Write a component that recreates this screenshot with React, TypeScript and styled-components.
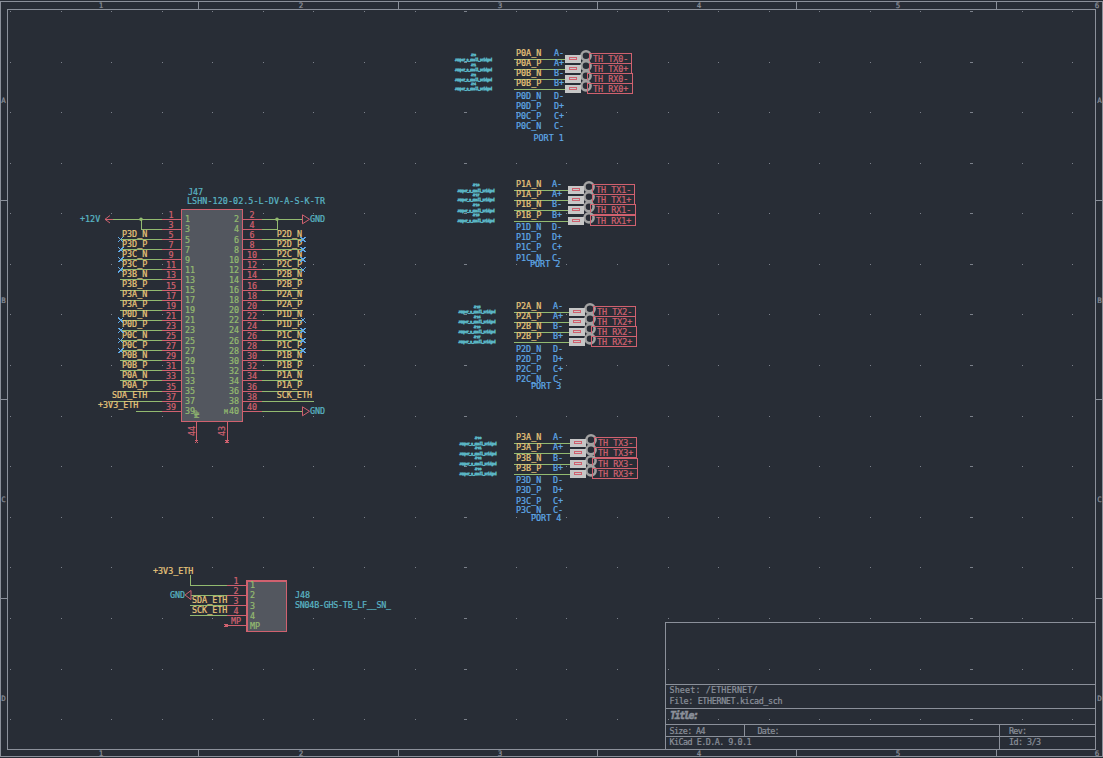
import React from "react";
import styled, { createGlobalStyle } from "styled-components";

const BG = "#282d36";
const FRAME = "#8b909a";
const WIRE = "#93ba70";
const PIN = "#d0616f";
const LABEL = "#e8c67c";
const CYAN = "#5ab5c4";
const BLUE = "#5fa9e8";
const BODY = "#53575f";
const GREY = "#c6c6c6";

const GlobalStyle = createGlobalStyle`
  html, body {
    margin: 0;
    padding: 0;
    background: ${BG};
    overflow: hidden;
  }
`;

const Sheet = styled.div`
  width: 1103px;
  height: 758px;
  background: ${BG};
`;

const Canvas = styled.svg`
  display: block;
  width: 1103px;
  height: 758px;
  line,
  rect,
  polyline {
    shape-rendering: crispEdges;
  }
`;

const Label = styled.text<{ $color?: string; $size?: number }>`
  font-family: "DejaVu Sans Mono", "Liberation Mono", monospace;
  font-size: ${({ $size }) => $size ?? 8.4}px;
  fill: ${({ $color }) => $color ?? LABEL};
  stroke: ${({ $color }) => $color ?? LABEL};
  stroke-width: 0.22px;
`;

const TinyLabel = styled.text`
  font-family: "Liberation Mono", monospace;
  font-size: 2.8px;
  fill: ${CYAN};
  stroke: ${CYAN};
  stroke-width: 0.9px;
`;

const TitleLabel = styled(Label)`
  font-weight: 700;
  font-style: italic;
  font-size: 10px;
  stroke-width: 0.5px;
`;

const Seg = styled.line<{ $color: string }>`
  stroke: ${({ $color }) => $color};
  stroke-width: 1px;
`;

const Outline = styled.rect`
  fill: none;
  stroke: ${PIN};
  stroke-width: 1px;
`;

const Body = styled.rect`
  fill: ${BODY};
  stroke: ${PIN};
  stroke-width: 1.3px;
`;

const Jumper = styled.rect`
  fill: ${GREY};
`;

const JumperLink = styled.rect`
  fill: none;
  stroke: ${PIN};
  stroke-width: 1px;
`;

const Disc = styled.circle`
  fill: none;
  stroke: #a2a2a2;
  stroke-width: 2.6px;
`;

const Junction = styled.circle`
  fill: ${WIRE};
`;

const Flag = styled.polygon`
  fill: none;
  stroke: ${PIN};
  stroke-width: 1px;
`;

const GridDot = styled.rect`
  fill: #7c818b;
`;

const NoConnect: React.FC<{ x: number; y: number; color?: string; r?: number }> = ({ x, y, color = BLUE, r = 2.5 }) => (
  <g>
    <line x1={x - r} y1={y - r} x2={x + r} y2={y + r} stroke={color} />
    <line x1={x - r} y1={y + r} x2={x + r} y2={y - r} stroke={color} />
  </g>
);

const rowY = (i: number) => 219.3 + i * 10.1;

const leftNets = ["P3D_N", "P3D_P", "P3C_N", "P3C_P", "P3B_N", "P3B_P", "P3A_N", "P3A_P", "P0D_N", "P0D_P", "P0C_N", "P0C_P", "P0B_N", "P0B_P", "P0A_N", "P0A_P"];
const rightNets = ["P2D_N", "P2D_P", "P2C_N", "P2C_P", "P2B_N", "P2B_P", "P2A_N", "P2A_P", "P1D_N", "P1D_P", "P1C_N", "P1C_P", "P1B_N", "P1B_P", "P1A_N", "P1A_P"];
const noConnectRows = [2, 3, 4, 5, 10, 11, 12, 13];

const J47: React.FC = () => (
  <g>
    <Body x={181.5} y={209.5} width={61} height={212} />
    <Label x={188} y={194.5} $color={CYAN}>J47</Label>
    <Label x={187} y={204} $color={CYAN} textLength={138}>LSHN-120-02.5-L-DV-A-S-K-TR</Label>
    {Array.from({ length: 20 }, (_, i) => {
      const y = rowY(i);
      return (
        <g key={i}>
          <Seg $color={PIN} x1={162} y1={y} x2={181} y2={y} />
          <Seg $color={PIN} x1={243} y1={y} x2={262} y2={y} />
          <Label x={171} y={y - 1.5} textAnchor="middle" $color={PIN}>{i * 2 + 1}</Label>
          <Label x={252} y={y - 1.5} textAnchor="middle" $color={PIN}>{i * 2 + 2}</Label>
          <Label x={185} y={y + 3} $color={WIRE}>{i * 2 + 1}</Label>
          <Label x={239} y={y + 3} textAnchor="end" $color={WIRE}>{i * 2 + 2}</Label>
        </g>
      );
    })}
    {leftNets.map((net, i) => (
      <g key={net}>
        <Seg $color={WIRE} x1={120} y1={rowY(i + 2)} x2={162} y2={rowY(i + 2)} />
        <Label x={122} y={rowY(i + 2) - 3}>{net}</Label>
      </g>
    ))}
    {rightNets.map((net, i) => (
      <g key={net}>
        <Seg $color={WIRE} x1={262} y1={rowY(i + 2)} x2={303} y2={rowY(i + 2)} />
        <Label x={302} y={rowY(i + 2) - 3} textAnchor="end">{net}</Label>
      </g>
    ))}
    {noConnectRows.map((r) => (
      <g key={r}>
        <NoConnect x={120.7} y={rowY(r)} />
        <NoConnect x={303} y={rowY(r)} />
      </g>
    ))}

    <Seg $color={WIRE} x1={110} y1={rowY(18)} x2={162} y2={rowY(18)} />
    <Label x={112} y={rowY(18) - 3}>SDA_ETH</Label>
    <Seg $color={WIRE} x1={136} y1={rowY(19)} x2={162} y2={rowY(19)} />
    <Label x={98} y={rowY(19) - 3}>+3V3_ETH</Label>
    <Seg $color={WIRE} x1={262} y1={rowY(18)} x2={313.5} y2={rowY(18)} />
    <Label x={312} y={rowY(18) - 3} textAnchor="end">SCK_ETH</Label>

    <Seg $color={WIRE} x1={113} y1={rowY(0)} x2={162} y2={rowY(0)} />
    <polyline points="141,219 141,229.5 162,229.5" fill="none" stroke={WIRE} />
    <Junction cx={141} cy={219.3} r={1.8} />
    <line x1={105} y1={219.3} x2={113} y2={219.3} stroke={PIN} />
    <polyline points="110,215.5 105,219.3 110,223" fill="none" stroke={PIN} style={{ shapeRendering: "auto" }} />
    <Label x={80} y={222} $color={CYAN}>+12V</Label>

    <Seg $color={WIRE} x1={262} y1={rowY(0)} x2={302} y2={rowY(0)} />
    <polyline points="277,219 277,229.5 262,229.5" fill="none" stroke={WIRE} />
    <Junction cx={277} cy={219.3} r={1.8} />
    <Flag points="302.5,214.8 309.5,219.3 302.5,223.8" />
    <Label x={310} y={222} $color={CYAN}>GND</Label>

    <Seg $color={WIRE} x1={262} y1={rowY(19)} x2={302} y2={rowY(19)} />
    <Flag points="302.5,406.8 309.5,411.3 302.5,415.8" />
    <Label x={310} y={414} $color={CYAN}>GND</Label>

    <Seg $color={PIN} x1={196.5} y1={422} x2={196.5} y2={441} />
    <Seg $color={PIN} x1={227} y1={422} x2={227} y2={441} />
    <NoConnect x={196.5} y={441.5} color={PIN} r={1.5} />
    <NoConnect x={227} y={441.5} color={PIN} r={1.5} />
    <Label transform="translate(195,436) rotate(-90)" $color={PIN}>44</Label>
    <Label transform="translate(225,436) rotate(-90)" $color={PIN}>43</Label>
    <Label transform="translate(199,418) rotate(-90)" $color={WIRE} $size={6.5}>MP</Label>
    <Label transform="translate(224,414)" $color={WIRE} $size={6.5}>M</Label>
  </g>
);

const J48: React.FC = () => {
  const ys = [585, 595, 605.5, 615.5, 625.5];
  return (
    <g>
      <Body x={247} y={581} width={39.5} height={50.5} />
      {ys.map((y, i) => (
        <g key={y}>
          <Seg $color={PIN} x1={i === 4 ? 226 : 227} y1={y} x2={247} y2={y} />
          <Label x={250} y={y + 3} $color={WIRE}>{i === 4 ? "MP" : i + 1}</Label>
          <Label x={i === 4 ? 231 : 236} y={y - 1.5} textAnchor={i === 4 ? "start" : "middle"} $color={PIN}>{i === 4 ? "MP" : i + 1}</Label>
        </g>
      ))}
      <NoConnect x={226} y={625.5} color={PIN} r={1.5} />
      <polyline points="190,575 190,585 227,585" fill="none" stroke={WIRE} />
      <Label x={153} y={574}>+3V3_ETH</Label>
      <Seg $color={WIRE} x1={191} y1={595} x2={227} y2={595} />
      <Flag points="191,590.5 185,595 191,599.5" />
      <Label x={170} y={598} $color={CYAN}>GND</Label>
      <Seg $color={WIRE} x1={190} y1={605.5} x2={227} y2={605.5} />
      <Label x={192} y={602.5}>SDA_ETH</Label>
      <Seg $color={WIRE} x1={190} y1={615.5} x2={227} y2={615.5} />
      <Label x={192} y={612.5}>SCK_ETH</Label>
      <Label x={295} y={598} $color={CYAN}>J48</Label>
      <Label x={295} y={608} $color={CYAN} textLength={96}>SN04B-GHS-TB_LF__SN_</Label>
    </g>
  );
};

type PortSpec = {
  id: number;
  wires: number[];
  jumperX: number;
  letterX: number;
  tinyX: number;
  tinyY: number[];
  blueY: number[];
  nameX: number;
  nameY: number;
  parts: string[];
};

const ports: PortSpec[] = [
  {
    id: 0, wires: [59.3, 69.3, 79.3, 89.3], jumperX: 565, letterX: 554, tinyX: 473.5,
    tinyY: [54.5, 59.5, 64.5, 69.5, 74.5, 79.7, 84, 88.9], blueY: [96, 106, 116, 126], nameX: 533.5, nameY: 138,
    parts: ["JP3", "JP1", "JP2", "JP4"],
  },
  {
    id: 1, wires: [190.3, 200.3, 210.3, 221.3], jumperX: 568, letterX: 552, tinyX: 476,
    tinyY: [185, 190.5, 195, 200.3, 205, 211, 215, 221], blueY: [227, 237, 247, 257.5], nameX: 530, nameY: 263.5,
    parts: ["JP18", "JP17", "JP16", "JP15"],
  },
  {
    id: 2, wires: [312.3, 322.3, 332.3, 342.3], jumperX: 569, letterX: 553, tinyX: 477,
    tinyY: [307.3, 312.3, 317, 322.3, 327.2, 332.3, 337, 342.3], blueY: [349, 359, 369, 379], nameX: 531, nameY: 386,
    parts: ["JP25", "JP24", "JP26", "JP27"],
  },
  {
    id: 3, wires: [443.3, 453.3, 464.3, 474.3], jumperX: 570, letterX: 553, tinyX: 478,
    tinyY: [438, 443.7, 448, 453.5, 458, 464, 469, 474], blueY: [480, 490, 500.5, 510], nameX: 531, nameY: 518,
    parts: ["JP30", "JP31", "JP32", "JP33"],
  },
];

const WIRE_START = 514;
const NET_X = 516;

const Port: React.FC<{ spec: PortSpec }> = ({ spec }) => {
  const { id, wires, jumperX, letterX, tinyX, tinyY, blueY, nameX, nameY, parts } = spec;
  const topNets = [`P${id}A_N`, `P${id}A_P`, `P${id}B_N`, `P${id}B_P`];
  const botNets = [`P${id}D_N`, `P${id}D_P`, `P${id}C_P`, `P${id}C_N`];
  const tags = [`TH_TX${id}-`, `TH_TX${id}+`, `TH_RX${id}-`, `TH_RX${id}+`];
  return (
    <g>
      {parts.map((ref, i) => (
        <g key={ref}>
          <TinyLabel x={tinyX} y={tinyY[i * 2] + 1} textAnchor="middle">{ref}</TinyLabel>
          <TinyLabel x={tinyX} y={tinyY[i * 2 + 1] + 1} textAnchor="middle">Jumper_2_Small_Bridged</TinyLabel>
        </g>
      ))}
      {wires.map((y, i) => (
        <g key={y}>
          <Seg $color={WIRE} x1={WIRE_START} y1={y} x2={jumperX} y2={y} />
          <Label x={NET_X} y={y - 3}>{topNets[i]}</Label>
          <Label x={letterX} y={y - 3} $color={BLUE}>{["A-", "A+", "B-", "B+"][i]}</Label>
          <Disc cx={jumperX + 21} cy={y - 3.5} r={4.6} />
          <Jumper x={jumperX} y={y - 4} width={15.5} height={8} />
          <JumperLink x={jumperX + 4.5} y={y - 1.5} width={7} height={2} />
          <Outline x={jumperX + (i < 2 ? 24 : 22)} y={y - 5.5} width={i < 2 ? 42 : 45} height={10} />
          <Label x={jumperX + 28} y={y + 2.5} $color={PIN}>{tags[i]}</Label>
        </g>
      ))}
      {blueY.map((y, i) => (
        <g key={y}>
          <Label x={NET_X} y={y + 3} $color={BLUE}>{botNets[i]}</Label>
          <Label x={letterX} y={y + 3} $color={BLUE}>{["D-", "D+", "C+", "C-"][i]}</Label>
        </g>
      ))}
      <Label x={nameX} y={nameY + 3} $color={BLUE}>PORT {id + 1}</Label>
    </g>
  );
};

const DOT = 50.58;

const Dots: React.FC = () => (
  <g>
    {Array.from({ length: 15 }, (_, r) =>
      Array.from({ length: 22 }, (_, c) => {
        const wide = c === 9 || c === 19;
        return (
          <GridDot
            key={`${r}-${c}`}
            x={Math.round(10 + c * DOT) - (wide ? 1 : 0)}
            y={Math.round(11 + r * DOT)}
            width={wide ? 3 : 1}
            height={1}
          />
        );
      })
    )}
  </g>
);

const columns = [101, 301, 500, 699, 898, 1097];
const colTicks = [198, 398, 597, 796, 996];
const rows = ["A", "B", "C", "D"];
const rowCenters = [100, 300, 499, 698];
const rowTicks = [200, 399, 598];

const Frame: React.FC = () => (
  <g>
    <rect x={0.5} y={1.5} width={1102} height={755} fill="none" stroke={FRAME} />
    <rect x={7.5} y={9.5} width={1088} height={740} fill="none" stroke={FRAME} />
    {colTicks.map((x) => (
      <g key={x}>
        <Seg $color={FRAME} x1={x} y1={1} x2={x} y2={9} />
        <Seg $color={FRAME} x1={x} y1={749} x2={x} y2={757} />
      </g>
    ))}
    {rowTicks.map((y) => (
      <g key={y}>
        <Seg $color={FRAME} x1={0} y1={y} x2={7} y2={y} />
        <Seg $color={FRAME} x1={1095} y1={y} x2={1103} y2={y} />
      </g>
    ))}
    {columns.map((x, i) => (
      <g key={x}>
        <Label x={x} y={8} textAnchor="middle" $color={FRAME} $size={7.5}>{i + 1}</Label>
        <Label x={x} y={756} textAnchor="middle" $color={FRAME} $size={7.5}>{i + 1}</Label>
      </g>
    ))}
    {rows.map((l, i) => (
      <g key={l}>
        <Label x={3.5} y={rowCenters[i] + 3} textAnchor="middle" $color={FRAME} $size={7.5}>{l}</Label>
        <Label x={1099.5} y={rowCenters[i] + 3} textAnchor="middle" $color={FRAME} $size={7.5}>{l}</Label>
      </g>
    ))}
  </g>
);

const TitleBlock: React.FC = () => (
  <g>
    <rect x={665.5} y={622.5} width={430} height={127} fill="none" stroke={FRAME} />
    {[684.5, 708.5, 724.5, 736.5].map((y) => (
      <Seg key={y} $color={FRAME} x1={665} y1={y} x2={1095} y2={y} />
    ))}
    <Seg $color={FRAME} x1={744.5} y1={724} x2={744.5} y2={736} />
    <Seg $color={FRAME} x1={999.5} y1={724} x2={999.5} y2={749} />
    <Label x={669.5} y={692.5} $color={FRAME} textLength={88}>Sheet: /ETHERNET/</Label>
    <Label x={669.5} y={703.5} $color={FRAME} textLength={113}>File: ETHERNET.kicad_sch</Label>
    <TitleLabel x={670} y={719} $color={FRAME} textLength={29}>Title:</TitleLabel>
    <Label x={669.5} y={733.5} $color={FRAME} textLength={36}>Size: A4</Label>
    <Label x={757.5} y={733.5} $color={FRAME} textLength={22}>Date:</Label>
    <Label x={1009} y={733.5} $color={FRAME} textLength={18}>Rev:</Label>
    <Label x={669.5} y={745} $color={FRAME} textLength={82}>KiCad E.D.A. 9.0.1</Label>
    <Label x={1009} y={745} $color={FRAME} textLength={32}>Id: 3/3</Label>
  </g>
);

export default function App() {
  return (
    <Sheet>
      <GlobalStyle />
      <Canvas viewBox="0 0 1103 758">
        <Dots />
        <Frame />
        <TitleBlock />
        <J47 />
        <J48 />
        {ports.map((p) => (
          <Port key={p.id} spec={p} />
        ))}
      </Canvas>
    </Sheet>
  );
}
